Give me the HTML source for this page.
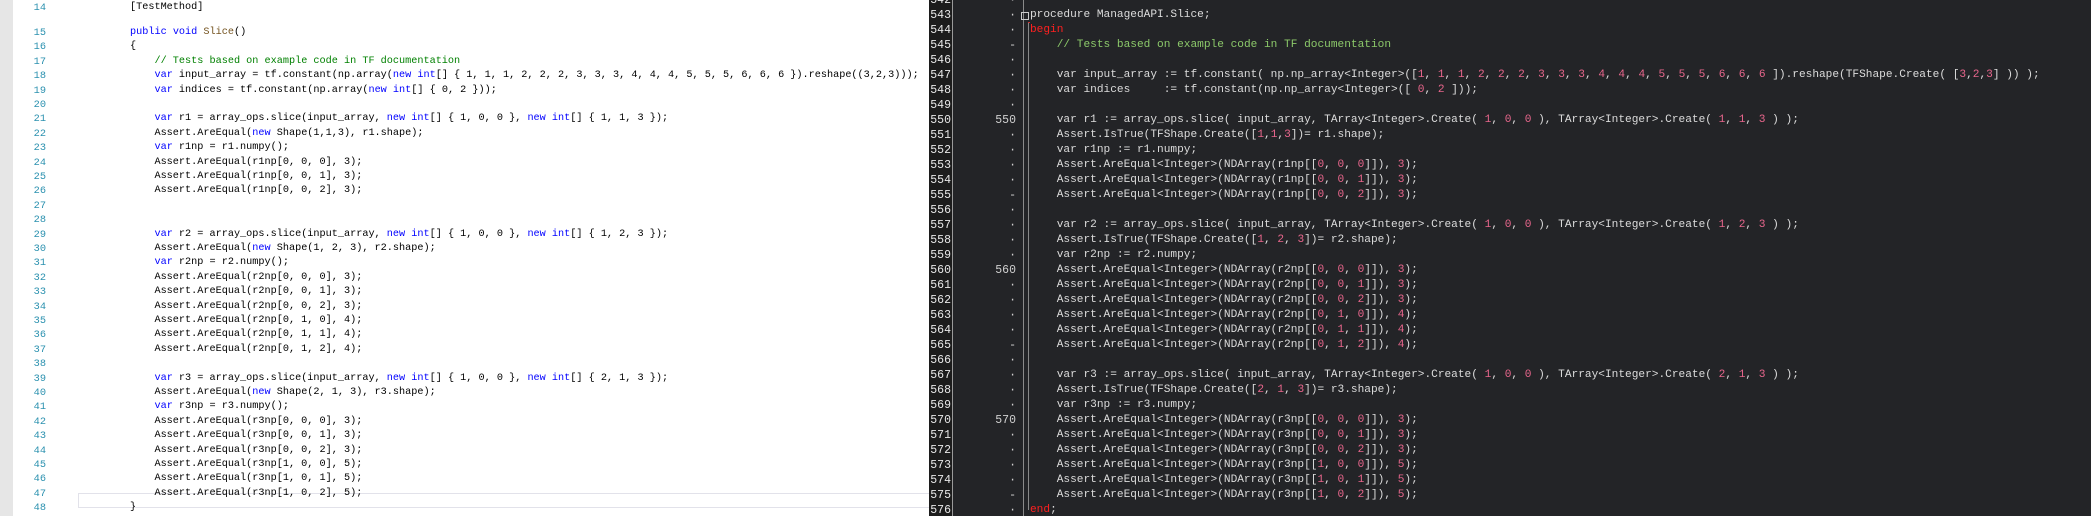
<!DOCTYPE html>
<html><head><meta charset="utf-8"><style>
body{margin:0;width:2091px;height:516px;overflow:hidden;position:relative;background:#fff;font-family:"Liberation Mono",monospace}
#L{position:absolute;left:0;top:0;width:929px;height:516px;background:#fff;overflow:hidden}
#L .strip{position:absolute;left:0;top:0;width:13px;height:516px;background:#e6e6e6}
#L .ln{position:absolute;left:14px;width:32px;text-align:right;color:#2b91af;font-size:10.3px}
#L .cd{position:absolute;left:130px;white-space:pre;color:#000;font-size:10.2px}
.k{color:#0000ff}.c{color:#008000}.m{color:#74531f}
#R{position:absolute;left:929px;top:0;width:1162px;height:516px;background:#232427;overflow:hidden}
#R .numbg{position:absolute;left:0;top:0;width:23px;height:516px;background:#1c1c1c;border-right:1px solid #9a9a9a}
#R .vl{position:absolute;left:94px;top:0;width:1px;height:516px;background:#8a8a8a}
#R .row{position:absolute;height:15px;line-height:15px;font-size:11.5px;white-space:pre}
#R .n{left:-12px;width:34px;text-align:right;color:#e8e8e8}
#R .g{left:40px;width:47px;text-align:right;color:#d0d0d0}
#R .t{left:101px;color:#dcdcdc;font-size:11.15px}
.r{color:#ff2020}.p{color:#e8668c}.gc{color:#8cc96a}
</style></head><body>
<div id="L"><div class="strip"></div>
<div style="position:absolute;left:78px;top:493px;width:860px;height:13px;border:1px solid #e2e2ea"></div>
<div id="lc"></div>
</div>
<div id="R"><div class="numbg"></div><div class="vl"></div>
<div style="position:absolute;left:92px;top:12px;width:6px;height:6px;border:1px solid #ccc"></div>
<div style="position:absolute;left:99px;top:22px;width:1px;height:488px;background:#888"></div>
<div style="position:absolute;left:99px;top:22px;width:2px;height:1px;background:#c33"></div>
<div id="rc"></div>
</div>
<script>
var L=[
[14,'[TestMethod]'],
[15,'<span class="k">public</span> <span class="k">void</span> <span class="m">Slice</span>()'],
[16,'{'],
[17,'    <span class="c">// Tests based on example code in TF documentation</span>'],
[18,'    <span class="k">var</span> input_array = tf.constant(np.array(<span class="k">new</span> <span class="k">int</span>[] { 1, 1, 1, 2, 2, 2, 3, 3, 3, 4, 4, 4, 5, 5, 5, 6, 6, 6 }).reshape((3,2,3)));'],
[19,'    <span class="k">var</span> indices = tf.constant(np.array(<span class="k">new</span> <span class="k">int</span>[] { 0, 2 }));'],
[20,''],
[21,'    <span class="k">var</span> r1 = array_ops.slice(input_array, <span class="k">new</span> <span class="k">int</span>[] { 1, 0, 0 }, <span class="k">new</span> <span class="k">int</span>[] { 1, 1, 3 });'],
[22,'    Assert.AreEqual(<span class="k">new</span> Shape(1,1,3), r1.shape);'],
[23,'    <span class="k">var</span> r1np = r1.numpy();'],
[24,'    Assert.AreEqual(r1np[0, 0, 0], 3);'],
[25,'    Assert.AreEqual(r1np[0, 0, 1], 3);'],
[26,'    Assert.AreEqual(r1np[0, 0, 2], 3);'],
[27,''],[28,''],
[29,'    <span class="k">var</span> r2 = array_ops.slice(input_array, <span class="k">new</span> <span class="k">int</span>[] { 1, 0, 0 }, <span class="k">new</span> <span class="k">int</span>[] { 1, 2, 3 });'],
[30,'    Assert.AreEqual(<span class="k">new</span> Shape(1, 2, 3), r2.shape);'],
[31,'    <span class="k">var</span> r2np = r2.numpy();'],
[32,'    Assert.AreEqual(r2np[0, 0, 0], 3);'],
[33,'    Assert.AreEqual(r2np[0, 0, 1], 3);'],
[34,'    Assert.AreEqual(r2np[0, 0, 2], 3);'],
[35,'    Assert.AreEqual(r2np[0, 1, 0], 4);'],
[36,'    Assert.AreEqual(r2np[0, 1, 1], 4);'],
[37,'    Assert.AreEqual(r2np[0, 1, 2], 4);'],
[38,''],
[39,'    <span class="k">var</span> r3 = array_ops.slice(input_array, <span class="k">new</span> <span class="k">int</span>[] { 1, 0, 0 }, <span class="k">new</span> <span class="k">int</span>[] { 2, 1, 3 });'],
[40,'    Assert.AreEqual(<span class="k">new</span> Shape(2, 1, 3), r3.shape);'],
[41,'    <span class="k">var</span> r3np = r3.numpy();'],
[42,'    Assert.AreEqual(r3np[0, 0, 0], 3);'],
[43,'    Assert.AreEqual(r3np[0, 0, 1], 3);'],
[44,'    Assert.AreEqual(r3np[0, 0, 2], 3);'],
[45,'    Assert.AreEqual(r3np[1, 0, 0], 5);'],
[46,'    Assert.AreEqual(r3np[1, 0, 1], 5);'],
[47,'    Assert.AreEqual(r3np[1, 0, 2], 5);'],
[48,'}']];
var h='';
L.forEach(function(a,i){var y=i==0?2:(27+(i-1)*14.4);h+='<div class="ln" style="top:'+y+'px">'+a[0]+'</div><div class="cd" style="top:'+y+'px">'+a[1]+'</div>';});
document.getElementById('lc').innerHTML=h;
function P(s){return s.replace(/(\d+)/g,'<span class="p">$1</span>');}
function A(v,a,b,c,r){return '    Assert.AreEqual&lt;Integer&gt;(NDArray('+v+'[['+P(a+', '+b+', '+c)+']]), '+P(r)+');';}
function S(v,x){return '    var '+v+' := array_ops.slice( input_array, TArray&lt;Integer&gt;.Create( '+P('1, 0, 0')+' ), TArray&lt;Integer&gt;.Create( '+P(x)+' ) );';}
var R=[
[542,''],
[543,'procedure ManagedAPI.Slice;'],
[544,'<span class="r">begin</span>'],
[545,'    <span class="gc">// Tests based on example code in TF documentation</span>'],
[546,''],
[547,'    var input_array := tf.constant( np.np_array&lt;Integer&gt;(['+P('1, 1, 1, 2, 2, 2, 3, 3, 3, 4, 4, 4, 5, 5, 5, 6, 6, 6')+' ]).reshape(TFShape.Create( ['+P('3,2,3')+'] )) );'],
[548,'    var indices     := tf.constant(np.np_array&lt;Integer&gt;([ '+P('0, 2')+' ]));'],
[549,''],
[550,S('r1','1, 1, 3')],
[551,'    Assert.IsTrue(TFShape.Create(['+P('1,1,3')+'])= r1.shape);'],
[552,'    var r1np := r1.numpy;'],
[553,A('r1np',0,0,0,'3')],[554,A('r1np',0,0,1,'3')],[555,A('r1np',0,0,2,'3')],
[556,''],
[557,S('r2','1, 2, 3')],
[558,'    Assert.IsTrue(TFShape.Create(['+P('1, 2, 3')+'])= r2.shape);'],
[559,'    var r2np := r2.numpy;'],
[560,A('r2np',0,0,0,'3')],[561,A('r2np',0,0,1,'3')],[562,A('r2np',0,0,2,'3')],
[563,A('r2np',0,1,0,'4')],[564,A('r2np',0,1,1,'4')],[565,A('r2np',0,1,2,'4')],
[566,''],
[567,S('r3','2, 1, 3')],
[568,'    Assert.IsTrue(TFShape.Create(['+P('2, 1, 3')+'])= r3.shape);'],
[569,'    var r3np := r3.numpy;'],
[570,A('r3np',0,0,0,'3')],[571,A('r3np',0,0,1,'3')],[572,A('r3np',0,0,2,'3')],
[573,A('r3np',1,0,0,'5')],[574,A('r3np',1,0,1,'5')],[575,A('r3np',1,0,2,'5')],
[576,'<span class="r">end</span>;']];
h='';
R.forEach(function(a,i){var y=-7.5+i*15;var n=a[0];var g=(n%10==0)?n:((n%5==0)?'-':'·');
h+='<div class="row n" style="top:'+y+'px">'+n+'</div><div class="row g" style="top:'+y+'px">'+g+'</div><div class="row t" style="top:'+y+'px">'+a[1]+'</div>';});
document.getElementById('rc').innerHTML=h;
</script>
</body></html>
